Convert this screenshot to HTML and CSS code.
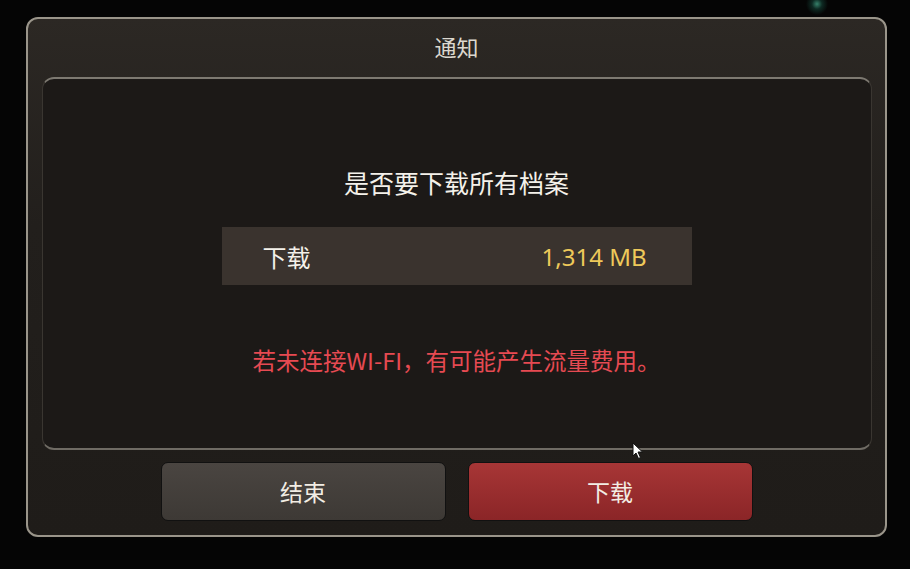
FILE: index.html
```html
<!DOCTYPE html>
<html lang="zh">
<head>
  <meta charset="UTF-8">
  <title>通知</title>
  <link rel="stylesheet" href="styles.css">
</head>
<body>

  <div class="spark"></div>

  <div class="dialog">
    <div class="dialog-title">通知</div>

    <div class="panel">
      <div class="question">是否要下载所有档案</div>

      <div class="size-row">
        <span class="size-label">下载</span>
        <span class="size-value">1,314 MB</span>
      </div>

      <div class="warning">若未连接WI-FI，有可能产生流量费用。</div>
    </div>

    <div class="actions">
      <button class="btn btn-cancel">结束</button>
      <button class="btn btn-ok">下载</button>
    </div>
  </div>

  <!-- mouse pointer -->
  <svg class="pointer" width="12" height="18" viewBox="0 0 12 18">
    <path d="M1 1 L1 14 L4 11 L6.5 16.5 L8.5 15.5 L6 10 L10.5 10 Z" fill="#fff" stroke="#111" stroke-width="1"/>
  </svg>

</body>
</html>
```

FILE: styles.css
```css
body {
  margin: 0;
  width: 910px;
  height: 569px;
  background: #050505;
  font-family: "Noto Sans CJK SC", "Noto Sans", sans-serif;
  position: relative;
  overflow: hidden;
}

.spark {
  position: absolute;
  left: 805px;
  top: -8px;
  width: 24px;
  height: 24px;
  background: radial-gradient(circle, rgba(70,170,140,0.75) 0, rgba(30,110,90,0.35) 30%, transparent 65%);
}

.dialog {
  margin: 17px 0 0 26px;
  width: 857px;
  height: 516px;
  border: 2px solid #9a958a;
  border-radius: 12px;
  background: linear-gradient(#2c2824, #221f1c 40%, #1f1c19);
  display: flex;
  flex-direction: column;
  align-items: center;
}

.dialog-title {
  height: 54px;
  line-height: 54px;
  padding-bottom: 4px;
  color: #dcd8cf;
  font-size: 22px;
}

.panel {
  width: 830px;
  height: 373px;
  border-top: 2px solid #7d7971;
  border-bottom: 2px solid #6f6b64;
  border-left: 1px solid #3a3631;
  border-right: 1px solid #3a3631;
  border-radius: 12px;
  background: #1c1917;
  display: flex;
  flex-direction: column;
  align-items: center;
  padding-top: 87px;
  box-sizing: border-box;
}

.question {
  color: #f4f1ea;
  font-size: 25px;
  line-height: 32px;
}

.size-row {
  margin-top: 29px;
  width: 470px;
  height: 58px;
  background: #3a332e;
  display: flex;
  justify-content: space-between;
  align-items: center;
  padding: 0 45px 0 41px;
  box-sizing: border-box;
}

.size-label {
  color: #f4f1ea;
  font-size: 24px;
}

.size-value {
  color: #eec95a;
  font-family: "Noto Sans", sans-serif;
  font-size: 24px;
}

.warning {
  margin-top: 59px;
  color: #e64a52;
  font-size: 23.5px;
  line-height: 32px;
}

.actions {
  margin-top: 12px;
  display: flex;
  gap: 22px;
}

.btn {
  width: 285px;
  height: 59px;
  border: 1px solid #111;
  border-radius: 7px;
  font-family: "Noto Sans CJK SC", "Noto Sans", sans-serif;
  font-size: 23px;
  color: #f2ede4;
  padding-bottom: 3px;
  cursor: pointer;
}

.btn-cancel {
  background: linear-gradient(#4a4541, #3d3935);
}

.btn-ok {
  background: linear-gradient(#a73636, #8b2527);
}

.pointer {
  position: absolute;
  left: 632px;
  top: 442px;
}
```
